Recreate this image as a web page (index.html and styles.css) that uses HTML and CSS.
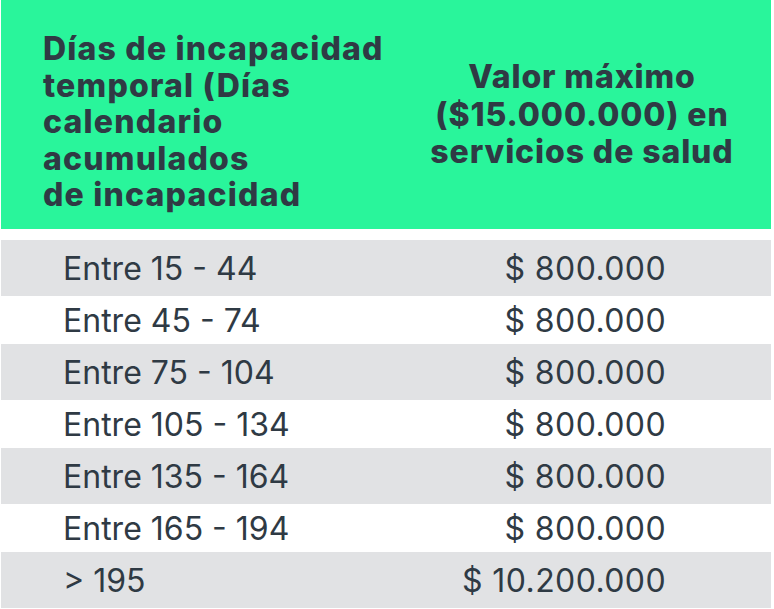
FILE: index.html
```html
<!DOCTYPE html>
<html lang="es">
<head>
<meta charset="utf-8">
<title>Tabla de incapacidad</title>
<link rel="stylesheet" href="styles.css">
</head>
<body>
<div class="table">
  <div class="head">
    <div class="head-left">Días de incapacidad<br>temporal (Días<br>calendario<br>acumulados<br>de incapacidad</div>
    <div class="head-right">Valor máximo<br>($15.000.000) en<br>servicios de salud</div>
  </div>
  <div class="rows">
    <div class="row shade"><span class="c1">Entre 15 - 44</span><span class="c2">$ 800.000</span></div>
    <div class="row"><span class="c1">Entre 45 - 74</span><span class="c2">$ 800.000</span></div>
    <div class="row shade"><span class="c1">Entre 75 - 104</span><span class="c2">$ 800.000</span></div>
    <div class="row"><span class="c1">Entre 105 - 134</span><span class="c2">$ 800.000</span></div>
    <div class="row shade"><span class="c1">Entre 135 - 164</span><span class="c2">$ 800.000</span></div>
    <div class="row"><span class="c1">Entre 165 - 194</span><span class="c2">$ 800.000</span></div>
    <div class="row shade"><span class="c1">&gt; 195</span><span class="c2">$ 10.200.000</span></div>
  </div>
</div>
</body>
</html>
```
FILE: styles.css
```css
html, body {
  margin: 0;
  padding: 0;
  background: #ffffff;
}
body {
  font-family: Inter, "Noto Sans", sans-serif;
  color: #2f3a44;
}
.table {
  width: 770px;
  margin-left: 1px;
}
.head {
  display: flex;
  height: 229px;
  background: #29f59b;
  font-weight: 800;
  font-size: 32px;
}
.head-left {
  width: 346px;
  padding: 31px 0 0 42px;
  line-height: 36.5px;
  letter-spacing: 1.2px;
  white-space: nowrap;
}
.head-right {
  flex: 1;
  display: flex;
  align-items: center;
  justify-content: center;
  text-align: center;
  line-height: 37.5px;
  letter-spacing: 0.9px;
  white-space: nowrap;
  padding-left: 4px;
}
.rows {
  margin-top: 11px;
}
.row {
  display: flex;
  align-items: center;
  justify-content: space-between;
  height: 48px;
  padding: 0 105px 0 62px;
  font-size: 32px;
  font-weight: 400;
}
.row.shade {
  height: 56px;
  background: #e1e2e4;
}
.c2 {
  text-align: right;
  letter-spacing: 0.4px;
}
```
